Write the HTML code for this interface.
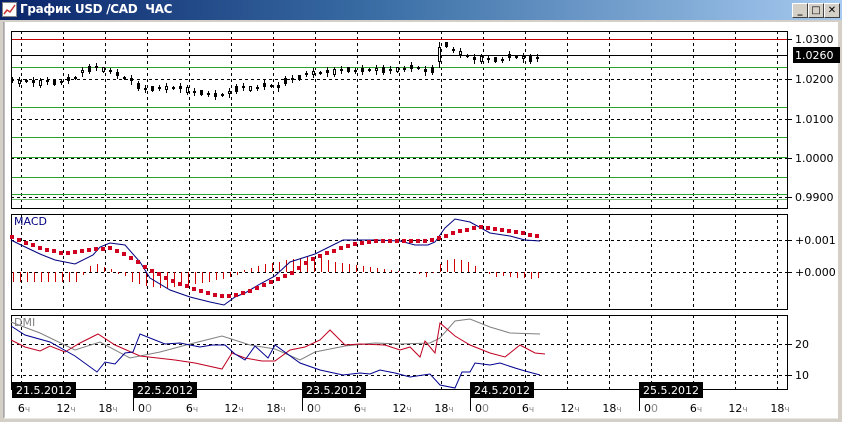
<!DOCTYPE html>
<html><head><meta charset="utf-8"><style>
html,body{margin:0;padding:0;width:842px;height:422px;overflow:hidden;background:#fff;font-family:"DejaVu Sans","Liberation Sans",sans-serif}
#title{position:absolute;left:0;top:0;width:842px;height:20px;background:linear-gradient(to right,#0a246a 0%,#3a6ea5 45%,#a6caf0 100%);}
#title span{position:absolute;left:20px;top:2px;color:#fff;font:bold 12px "DejaVu Sans",sans-serif;letter-spacing:-0.3px}
.btn{position:absolute;top:3px;width:14px;height:13px;background:#d4d0c8;border:1px solid;border-color:#fff #404040 #404040 #fff;font:bold 10px "DejaVu Sans",sans-serif;text-align:center;line-height:13px;color:#000}
</style></head><body>
<div id="title"><svg width="16" height="16" style="position:absolute;left:2px;top:2px"><rect x="0.5" y="0.5" width="14" height="14" fill="#fff" stroke="#888"/><polyline points="2,12 5,8 8,10 13,3" fill="none" stroke="#c33" stroke-width="1.5"/></svg><span>График USD /CAD&nbsp; ЧАС</span>
<div class="btn" style="left:792px">_</div><div class="btn" style="left:808px">□</div><div class="btn" style="left:824px">✕</div></div>
<svg id="c" width="842" height="422" style="position:absolute;left:0;top:0" xmlns="http://www.w3.org/2000/svg" font-family="DejaVu Sans, sans-serif" font-size="11" shape-rendering="crispEdges">
<rect x="0" y="20" width="842" height="2" fill="#d4d0c8"/>
<rect x="0" y="20" width="4" height="402" fill="#d4d0c8"/><line x1="4" y1="22" x2="4" y2="418" stroke="#808080"/>
<rect x="0" y="418" width="842" height="4" fill="#d4d0c8"/><line x1="4" y1="418" x2="842" y2="418" stroke="#fff"/>
<rect x="838" y="20" width="4" height="402" fill="#d4d0c8"/>
<g id="g"></g>
</svg>
<script>
var g=document.getElementById('g'),s='';
function L(x1,y1,x2,y2,c,w,d){s+='<line x1="'+x1+'" y1="'+y1+'" x2="'+x2+'" y2="'+y2+'" stroke="'+c+'" stroke-width="'+(w||1)+'"'+(d?' stroke-dasharray="'+d+'"':'')+'/>';}
function P(pts,c,w){s+='<polyline shape-rendering="auto" fill="none" stroke="'+c+'" stroke-width="'+(w||1)+'" points="'+pts+'"/>';}
function T(x,y,t,c,a){s+='<text x="'+x+'" y="'+y+'" fill="'+(c||'#000')+'"'+(a?' text-anchor="'+a+'"':'')+'>'+t+'</text>';}
var panels=[[31,208],[214,309],[315,389]];
for(var k=0;k<19;k++){var x=21+42*k+0.5;panels.forEach(function(p){L(x,p[0],x,p[1],'#000',1,'3,3');});}
L(11,39.5,787,39.5,'#c00000');L(11,55.5,787,55.5,'#000');
[79,119,158,197].forEach(function(y){L(11,y+0.5,787,y+0.5,'#000',1,'3,3');});
[67,107,137,157,177,194].forEach(function(y){L(11,y+0.5,787,y+0.5,'#2ea02e');});L(11,199.5,787,199.5,'#70c070');
[240,272,344,375].forEach(function(y){L(11,y+0.5,787,y+0.5,'#000',1,'3,3');});
panels.forEach(function(p){s+='<rect x="11.5" y="'+(p[0]+0.5)+'" width="776" height="'+(p[1]-p[0])+'" fill="none" stroke="#000"/>';});
[[39,'1.0300'],[79,'1.0200'],[119,'1.0100'],[158,'1.0000'],[197,'0.9900']].forEach(function(a){L(787,a[0]+0.5,792,a[0]+0.5,'#000');T(795,a[0]+4,a[1]);});
s+='<rect x="793" y="47" width="47" height="16" fill="#000"/>';T(795,59,'1.0260','#fff');
[[240,'+0.001'],[272,'+0.000'],[344,'20'],[375,'10']].forEach(function(a){L(787,a[0]+0.5,792,a[0]+0.5,'#000');T(795,a[0]+4,a[1]);});
var cy=[80,82,81,82,83,81,83,82,79,78,72,69,67,70,71,74,78,80,86,89,89,88,88,88,88,90,92,93,94,95,95,93,89,87,89,88,85,86,87,81,79,78,74,73,73,72,72,70,70,71,70,70,70,70,70,70,69,67,68,71,70,55,45,50,53,56,59,59,59,60,60,56,57,58,59,58];
cy.forEach(function(y,i){var x=12+7*i,h=[1,3,1,2,5,1,4][i%7],b=(i%3==1),w=[2,3,1,4,2,3,1][i%7];if(i==61){h=14;b=true;w=6;}
y=Math.round(y);L(x+0.5,y-Math.ceil(h/2)-w,x+0.5,y+Math.ceil(h/2)+w,'#000');s+='<rect x="'+(x-0.5)+'" y="'+(y-Math.floor(h/2)-0.5)+'" width="2" height="'+h+'" fill="'+(b?'#fff':'#000')+'" stroke="#000" stroke-width="1"/>';});
var hv=[-10,-10,-10,-10,-10,-10,-10,-10,-10,-10,-3,6,8,5,3,-2,-4,-10,-12,-14,-15,-16,-16,-15,-14,-13,-12,-11,-10,-8,-7,-5,-3,2,4,6,8,9,10,12,13,14,15,15,14,12,10,9,8,7,6,5,4,3,2,1,0,0,-2,-5,-1,8,12,13,12,10,6,0,-2,-5,-4,-5,-6,-6,-7,-6];
hv.forEach(function(v,i){if(v){var x=13+7*i+0.5;L(x,272,x,272-v,'#d00000');}});
P('11,240 21,245 40,254 55,260 75,264 93,255 100,247 110,243 125,245 140,262 150,278 170,290 190,297 210,302 224,305 235,297 245,293 260,284 275,276 290,262 315,254 343,240 375,240 400,241 415,245 428,245 435,242 445,228 455,219 470,222 490,233 510,236 525,240 540,241','#000080');
var sp=[[11,237],[40,248],[65,254],[85,250],[110,248],[130,257],[150,270],[175,282],[200,291],[225,297],[245,293],[265,285],[290,274],[310,260],[330,252],[350,245],[375,241],[400,241],[425,241],[440,238],[460,231],[480,227],[500,230],[520,233],[540,236]];
for(var x=12;x<=540;x+=7){var j=0;while(j<sp.length-2&&sp[j+1][0]<x)j++;var a=sp[j],b=sp[j+1],y=Math.round(a[1]+(b[1]-a[1])*(x-a[0])/(b[0]-a[0]));s+='<rect x="'+(x-2)+'" y="'+(y-2)+'" width="4" height="4" fill="#d00020"/>';}
T(14,225,'MACD','#000080');T(14,326,'DMI','#808080');
P('11,322 40,333 75,350 100,342 130,358 160,352 190,344 222,336 250,345 275,349 300,360 315,352 345,346 375,343 400,344 430,343 440,338 455,321 470,319 490,327 510,333 540,334','#808080');
P('11,340 25,347 40,351 50,346 65,352 80,343 98,334 115,345 140,356 175,360 195,363 222,369 232,353 245,358 262,361 275,361 290,350 305,347 320,340 330,330 345,345 360,344 385,345 400,350 410,347 420,357 425,341 435,353 440,323 455,336 470,345 490,353 505,357 520,345 535,353 545,354','#c00020');
P('11,326 25,335 50,342 75,356 97,372 105,362 115,364 125,353 133,352 140,334 165,344 180,343 200,347 212,345 225,345 235,354 245,360 255,346 268,358 275,345 300,363 320,370 343,375 360,373 370,374 380,370 395,373 410,377 430,374 440,385 455,388 462,372 470,372 475,363 490,365 500,363 515,368 525,371 540,375','#000090');
var hl=['6','12','18','00','6','12','18','00','6','12','18','00','6','12','18','00','6','12','18'];
hl.forEach(function(t,k){var x=21+42*k;if(t=='00'){x=[0,0,0,144,0,0,0,313,0,0,0,481,0,0,0,650][k];s+='<text x="'+(x-6)+'" y="412" fill="#000">0<tspan fill="#888">0</tspan></text>';}else{s+='<text x="'+(x+3)+'" y="412" text-anchor="middle">'+t+'<tspan fill="#888" font-size="9">ч</tspan></text>';}});
[[12,'21.5.2012'],[133,'22.5.2012'],[302,'23.5.2012'],[470,'24.5.2012'],[639,'25.5.2012']].forEach(function(d){s+='<rect x="'+d[0]+'" y="382" width="64" height="16" fill="#000"/>';T(d[0]+32,394,d[1],'#fff','middle');if(d[0]>12)L(d[0]+0.5,398,d[0]+0.5,411,'#000');});
g.innerHTML=s;
</script>
</body></html>
